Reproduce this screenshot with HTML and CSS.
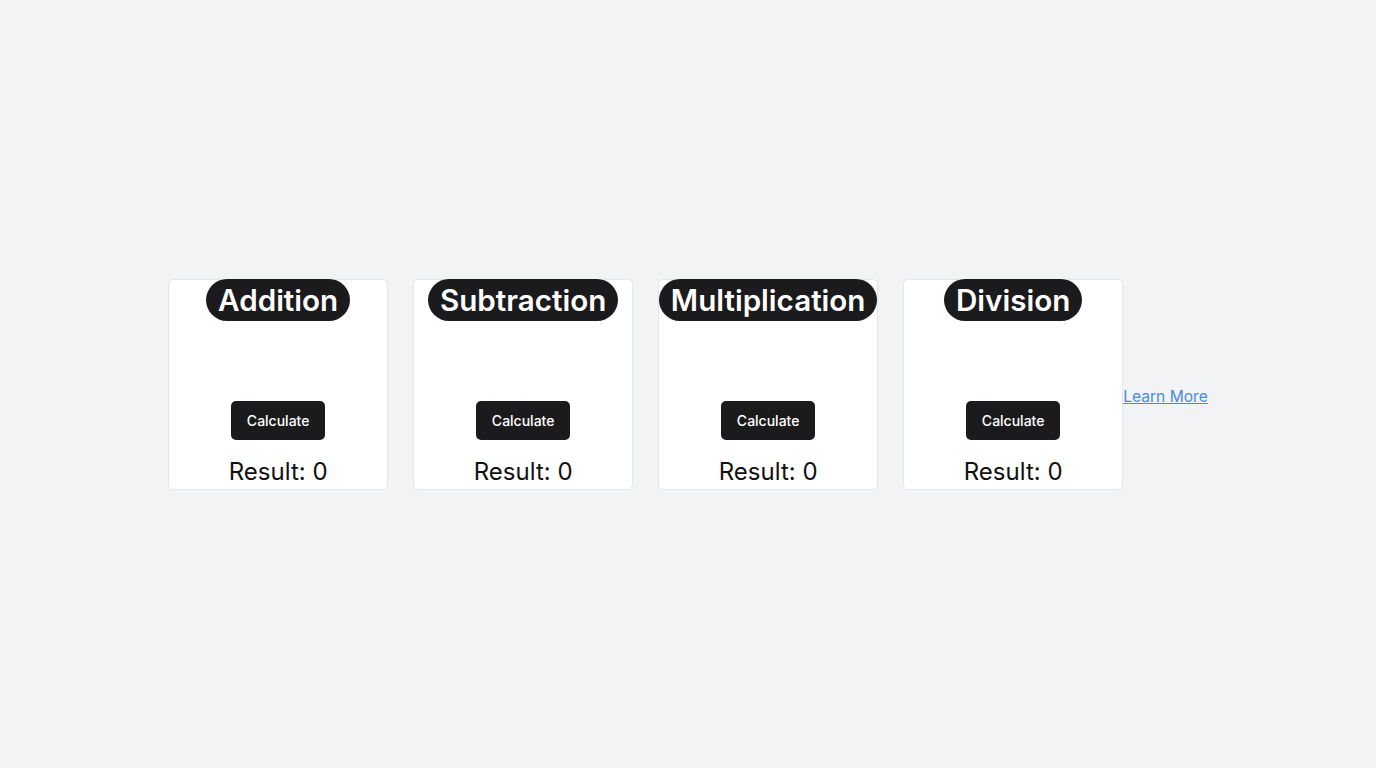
FILE: index.html
```html
<!DOCTYPE html>
<html lang="en">
<head>
<meta charset="utf-8">
<title>Calculator</title>
<link rel="stylesheet" href="styles.css">
</head>
<body>
<main class="page">
  <div class="row">
    <section class="card">
      <h2 class="title">Addition</h2>
      <div class="spacer"></div>
      <button class="btn">Calculate</button>
      <p class="result">Result: 0</p>
    </section>
    <section class="card">
      <h2 class="title">Subtraction</h2>
      <div class="spacer"></div>
      <button class="btn">Calculate</button>
      <p class="result">Result: 0</p>
    </section>
    <section class="card">
      <h2 class="title">Multiplication</h2>
      <div class="spacer"></div>
      <button class="btn">Calculate</button>
      <p class="result">Result: 0</p>
    </section>
    <section class="card">
      <h2 class="title">Division</h2>
      <div class="spacer"></div>
      <button class="btn">Calculate</button>
      <p class="result">Result: 0</p>
    </section>
    <a class="link" href="#">Learn More</a>
  </div>
</main>
</body>
</html>
```
FILE: styles.css
```css
* { box-sizing: border-box; }
html, body { margin: 0; padding: 0; }
body {
  background: #f2f3f5;
  font-family: Inter, "Noto Sans", sans-serif;
  color: #111111;
}
.page {
  min-height: 768px;
  display: flex;
  align-items: center;
  justify-content: center;
}
.row {
  display: flex;
  align-items: center;
  gap: 25px;
}
.card {
  width: 220px;
  height: 211px;
  background: #ffffff;
  border: 1px solid #e3e5e8;
  border-radius: 5px;
  display: flex;
  flex-direction: column;
  align-items: center;
}
.title {
  margin: -1px 0 0;
  background: #1b1b1d;
  color: #ffffff;
  font-size: 29.6px;
  font-weight: 600;
  line-height: 42px;
  height: 42px;
  padding: 0 12px;
  border-radius: 999px;
  white-space: nowrap;
}
.spacer { height: 80px; }
.btn {
  background: #1b1b1d;
  color: #ffffff;
  font-family: Inter, "Noto Sans", sans-serif;
  font-size: 14px;
  font-weight: 500;
  border: none;
  border-radius: 5px;
  height: 39px;
  padding: 0 16px;
}
.result {
  margin: 17px 0 0;
  font-size: 24px;
  line-height: 30px;
}
.link {
  margin-left: -25px;
  margin-top: 26px;
  color: #4a8ae0;
  font-size: 15.6px;
  line-height: 24px;
  text-decoration: underline;
}
```
